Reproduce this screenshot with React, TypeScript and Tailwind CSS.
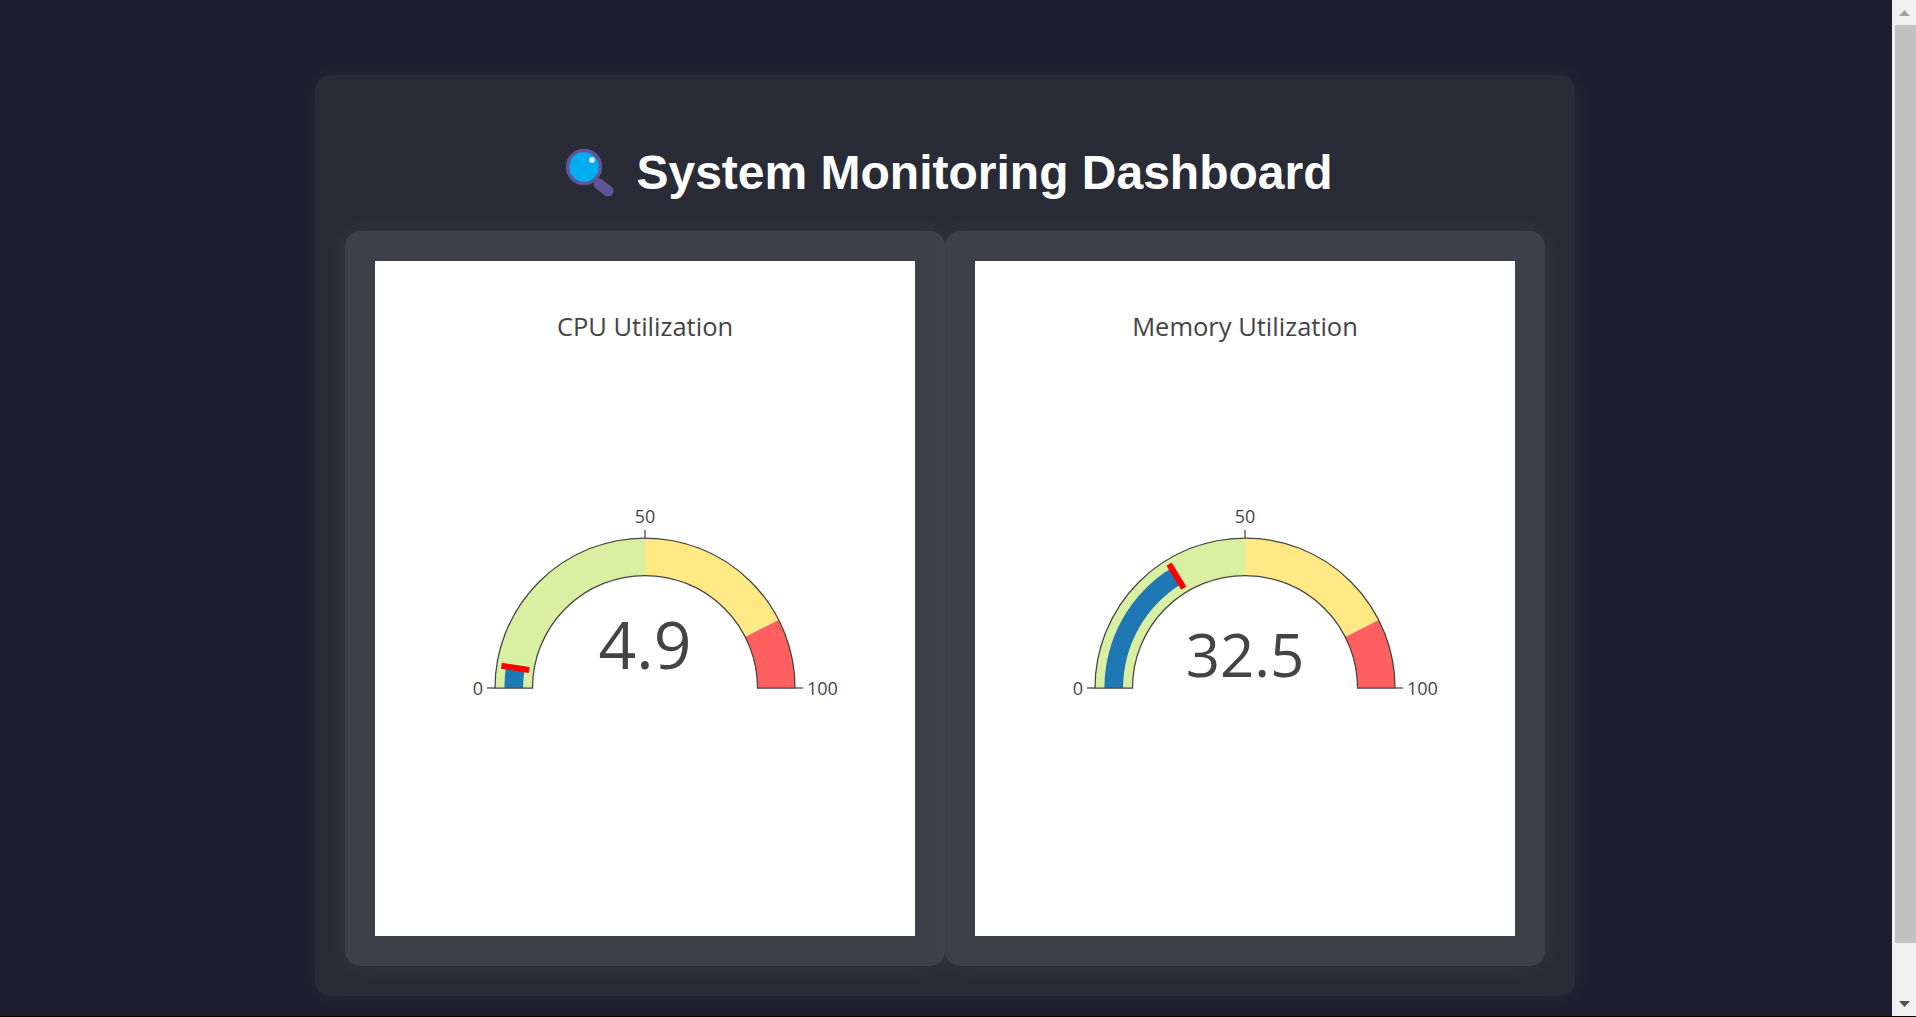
const CX = 270;
const CY = 427;
const OUTER = 150;
const INNER = 112.5;

// value 0..100 to a point on the half circle
function point(value: number, r: number) {
  const a = Math.PI * (1 - value / 100);
  return [CX + r * Math.cos(a), CY - r * Math.sin(a)];
}

function band(from: number, to: number, r0: number, r1: number) {
  const [ax, ay] = point(from, r1);
  const [bx, by] = point(to, r1);
  const [cx, cy] = point(to, r0);
  const [dx, dy] = point(from, r0);
  return `M${ax} ${ay}A${r1} ${r1} 0 0 1 ${bx} ${by}L${cx} ${cy}A${r0} ${r0} 0 0 0 ${dx} ${dy}Z`;
}

function Gauge({ title, value, size, baseline }: { title: string; value: number; size: number; baseline: number }) {
  const [lx1, ly1] = point(value, 117.2);
  const [lx2, ly2] = point(value, 145.3);
  return (
    <svg width="540" height="675" viewBox="0 0 540 675" className="block bg-white" style={{ fontFamily: '"Open Sans", sans-serif' }}>
      <text x={CX} y="75" textAnchor="middle" fontSize="25.5" fill="#444">{title}</text>

      <path d={band(0, 50, INNER, OUTER)} fill="#d9f0a3" />
      <path d={band(50, 85, INNER, OUTER)} fill="#ffe985" />
      <path d={band(85, 100, INNER, OUTER)} fill="#ff5f5f" />
      <path d={band(0, value, 121.9, 140.6)} fill="#1f77b4" />
      <line x1={lx1} y1={ly1} x2={lx2} y2={ly2} stroke="#ff0000" strokeWidth="6" />
      <path d={band(0, 100, INNER, OUTER)} fill="none" stroke="#444" strokeWidth="1.25" />

      <g stroke="#444" strokeWidth="1.25">
        <line x1={CX - 158} y1={CY} x2={CX - 150} y2={CY} />
        <line x1={CX} y1={CY - 158} x2={CX} y2={CY - 150} />
        <line x1={CX + 150} y1={CY} x2={CX + 158} y2={CY} />
      </g>
      <g fontSize="18" fill="#444">
        <text x={CX - 162} y={CY + 7} textAnchor="end">0</text>
        <text x={CX} y={CY - 165} textAnchor="middle">50</text>
        <text x={CX + 162} y={CY + 7}>100</text>
      </g>

      <text x={CX} y={baseline} textAnchor="middle" fontSize={size} fill="#444">{value}</text>
    </svg>
  );
}

function SearchIcon() {
  return (
    <svg width="66" height="60" viewBox="0 0 66 60" className="shrink-0">
      <line x1="42" y1="41" x2="51" y2="48" stroke="#5f5596" strokeWidth="11" strokeLinecap="round" />
      <circle cx="27" cy="24" r="16.5" fill="#00aeef" stroke="#5f5596" strokeWidth="3.5" />
      <circle cx="35" cy="17" r="2.7" fill="#ffffff" />
    </svg>
  );
}

function Scrollbar() {
  return (
    <div className="flex w-6 shrink-0 flex-col items-end bg-[#f1f1f1]">
      <svg width="24" height="25" viewBox="0 0 24 25" className="block shrink-0">
        <path d="M12.5 10L18 16H7Z" fill="#a3a3a3" />
      </svg>
      <div className="h-[918px] w-[21px] bg-[#c1c1c1]" />
      <svg width="24" height="73" viewBox="0 0 24 73" className="block shrink-0">
        <path d="M7 58H18L12.5 64Z" fill="#505050" />
      </svg>
    </div>
  );
}

export default function App() {
  return (
    <div className="h-[1017px] overflow-hidden bg-black">
      <div className="flex h-[1016px]">
        <main className="flex-1 bg-[#1e1e2e] pt-[75px]">
          <div className="ml-[315px] w-[1260px] rounded-[15px] bg-[#292b36] p-[30px] shadow-[0_0_25px_rgba(255,255,255,0.05)]">
            <h1
              className="mt-[38px] mb-[28px] flex items-center justify-center gap-[13px] text-[48px] leading-[56px] font-bold text-white"
              style={{ fontFamily: '"Liberation Sans", Arial, sans-serif' }}
            >
              <SearchIcon />
              <span>System Monitoring Dashboard</span>
            </h1>
            <div className="grid grid-cols-2">
              <div className="rounded-[15px] bg-[#3d4049] p-[30px] shadow-[0_0_25px_rgba(255,255,255,0.05)]">
                <Gauge title="CPU Utilization" value={4.9} size={66} baseline={408} />
              </div>
              <div className="rounded-[15px] bg-[#3d4049] p-[30px] shadow-[0_0_25px_rgba(255,255,255,0.05)]">
                <Gauge title="Memory Utilization" value={32.5} size={60} baseline={416} />
              </div>
            </div>
          </div>
        </main>
        <Scrollbar />
      </div>
    </div>
  );
}
